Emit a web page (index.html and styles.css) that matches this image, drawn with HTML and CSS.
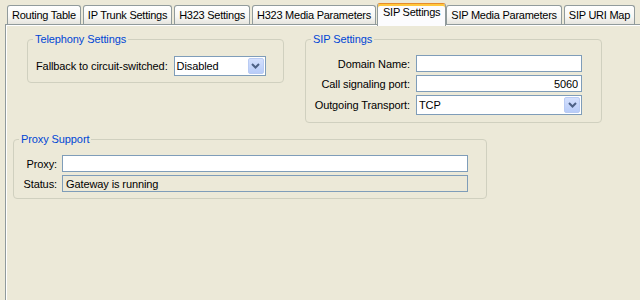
FILE: index.html
```html
<!DOCTYPE html>
<html lang="en">
<head>
    <meta charset="UTF-8">
    <title>SIP Settings</title>
    <link rel="stylesheet" href="styles.css">
</head>
<body>
    <div class="tabs">
        <div class="tab">Routing Table</div>
        <div class="tab">IP Trunk Settings</div>
        <div class="tab">H323 Settings</div>
        <div class="tab">H323 Media Parameters</div>
        <div class="tab active">SIP Settings</div>
        <div class="tab">SIP Media Parameters</div>
        <div class="tab">SIP URI Map</div>
    </div>

    <div class="pane">
        <div class="top-row">
            <fieldset class="group telephony">
                <legend>Telephony Settings</legend>
                <div class="inline-row">
                    <span class="label">Fallback to circuit-switched:</span>
                    <div class="combo short">
                        <span class="combo-text">Disabled</span>
                        <span class="combo-btn">
                            <svg width="9" height="6" viewBox="0 0 9 6"><path d="M1 1 L4.5 4.5 L8 1" fill="none" stroke="#4d6185" stroke-width="2"/></svg>
                        </span>
                    </div>
                </div>
            </fieldset>

            <fieldset class="group sip">
                <legend>SIP Settings</legend>
                <div class="form-grid sip-grid">
                    <span class="label right">Domain Name:</span>
                    <input class="field" type="text" value="">
                    <span class="label right">Call signaling port:</span>
                    <input class="field num" type="text" value="5060">
                    <span class="label right">Outgoing Transport:</span>
                    <div class="combo">
                        <span class="combo-text">TCP</span>
                        <span class="combo-btn">
                            <svg width="9" height="6" viewBox="0 0 9 6"><path d="M1 1 L4.5 4.5 L8 1" fill="none" stroke="#4d6185" stroke-width="2"/></svg>
                        </span>
                    </div>
                </div>
            </fieldset>
        </div>

        <fieldset class="group proxy">
            <legend>Proxy Support</legend>
            <div class="form-grid proxy-grid">
                <span class="label right">Proxy:</span>
                <input class="field" type="text" value="">
                <span class="label right">Status:</span>
                <input class="field readonly" type="text" value="Gateway is running" readonly>
            </div>
        </fieldset>
    </div>
</body>
</html>
```

FILE: styles.css
```css
:root {
    --panel-bg: #ECE9D8;
    --tab-border: #919B9C;
    --group-border: #D0D0BF;
    --field-border: #7F9DB9;
    --title-blue: #0046D5;
}

html, body {
    margin: 0;
    padding: 0;
    height: 100%;
    overflow: hidden;
}

body {
    font-family: "Liberation Sans", Arial, sans-serif;
    font-size: 11px;
    letter-spacing: -0.1px;
    color: #000;
    background: var(--panel-bg);
}

/* tab strip */
.tabs {
    display: flex;
    align-items: flex-end;
    gap: 2px;
    height: 24px;
    padding-left: 7px;
    white-space: nowrap;
    letter-spacing: -0.25px;
}

.tab {
    position: relative;
    height: 19px;
    box-sizing: border-box;
    padding: 0 4px;
    line-height: 18px;
    border: 1px solid var(--tab-border);
    border-bottom: none;
    border-radius: 3px 3px 0 0;
    background: linear-gradient(#FFFFFF, #F7F7F4 60%, #E6E5DE);
}

.tab.active {
    z-index: 1;
    height: 23px;
    margin: 0 -2px -2px -1px;
    padding: 0 5px;
    line-height: 17px;
    background: #FCFCFE;
    border-top: 1px solid #E68B2C;
    box-shadow: inset 0 2px 0 #FFC73C;
}

/* content pane */
.pane {
    height: calc(100% - 24px);
    box-sizing: border-box;
    margin-left: 5px;
    padding: 8px 0 0 7px;
    border-left: 1px solid var(--tab-border);
    border-top: 1px solid var(--tab-border);
    box-shadow: inset 1px 1px 0 #FFFFFF;
}

.top-row {
    display: flex;
    align-items: flex-start;
    gap: 21px;
    padding-left: 14px;
}

.group {
    box-sizing: border-box;
    margin: 0;
    padding: 9px 8px 6px 8px;
    min-inline-size: 0;
    border: 1px solid var(--group-border);
    border-radius: 4px;
}

.group legend {
    margin-left: -3px;
    padding: 0 2px;
    line-height: 13px;
    color: var(--title-blue);
}

.telephony {
    width: 257px;
    padding-top: 10px;
}

.sip {
    width: 297px;
    padding-bottom: 7px;
}

.proxy {
    width: 474px;
    margin-top: 10px;
}

.inline-row {
    display: flex;
    align-items: center;
    gap: 6px;
}

.form-grid {
    display: grid;
    column-gap: 6px;
    row-gap: 3px;
    align-items: center;
}

.sip-grid {
    grid-template-columns: 96px 166px;
}

.proxy-grid {
    grid-template-columns: 35px 406px;
    column-gap: 5px;
}

.label.right {
    text-align: right;
    white-space: nowrap;
}

.field {
    box-sizing: border-box;
    height: 17px;
    margin: 0;
    padding: 0 3px;
    border: 1px solid var(--field-border);
    background: #FFFFFF;
    font-family: inherit;
    font-size: 11px;
    letter-spacing: -0.1px;
    color: #000;
    outline: none;
}

.field.num {
    text-align: right;
}

.field.readonly {
    background: var(--panel-bg);
}

.combo {
    display: flex;
    box-sizing: border-box;
    height: 20px;
    padding: 1px;
    border: 1px solid var(--field-border);
    background: #FFFFFF;
}

.combo.short {
    width: 92px;
}

.combo-text {
    flex: 1;
    padding-left: 1px;
    line-height: 16px;
}

.combo-btn {
    display: flex;
    align-items: center;
    justify-content: center;
    width: 16px;
    box-sizing: border-box;
    border: 1px solid #B9CBF3;
    border-radius: 2px;
    background: linear-gradient(#D4E0FD, #B8CCF8);
}
```
